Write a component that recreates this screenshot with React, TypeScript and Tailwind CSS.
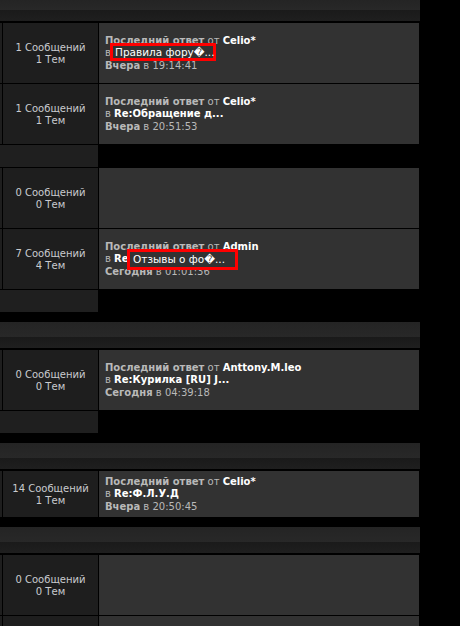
import React from "react";

// ─── DATA ────────────────────────────────────────────────────────────────
type Last = {
  author: string;
  topic: string;
  day: string;
  time: string;
};

type Row = {
  kind: "row";
  msgs?: number;
  topics?: number;
  h: string;
  last?: Last;
  mark?: { text: string; box: string };
};

type Item =
  | Row
  | { kind: "band" }
  | { kind: "gap"; h: string }
  | { kind: "header"; cut?: boolean };

const items: Item[] = [
  { kind: "header", cut: true },
  { kind: "gap", h: "h-[2px]" },
  {
    kind: "row",
    msgs: 1,
    topics: 1,
    h: "h-[60px]",
    // the red box hides the topic link, only "в" stays visible
    last: { author: "Celio*", topic: "", day: "Вчера", time: "19:14:41" },
    mark: { text: "Правила фору�...", box: "left-[11px] top-[20px] w-[106px] h-[18px] pl-[2px]" },
  },
  { kind: "gap", h: "h-px" },
  {
    kind: "row",
    msgs: 1,
    topics: 1,
    h: "h-[60px]",
    last: { author: "Celio*", topic: "Re:Обращение д...", day: "Вчера", time: "20:51:53" },
  },
  { kind: "gap", h: "h-px" },
  { kind: "band" },
  { kind: "gap", h: "h-px" },
  { kind: "row", msgs: 0, topics: 0, h: "h-[60px]" },
  { kind: "gap", h: "h-px" },
  {
    kind: "row",
    msgs: 7,
    topics: 4,
    h: "h-[60px]",
    last: { author: "Admin", topic: "Re", day: "Сегодня", time: "01:01:36" },
    mark: { text: "Отзывы о фо�...", box: "left-[28px] top-[20px] w-[111px] h-[21px] pl-[3px]" },
  },
  { kind: "gap", h: "h-px" },
  { kind: "band" },
  { kind: "gap", h: "h-[10px]" },
  { kind: "header" },
  { kind: "gap", h: "h-[2px]" },
  {
    kind: "row",
    msgs: 0,
    topics: 0,
    h: "h-[60px]",
    last: { author: "Anttony.M.leo", topic: "Re:Курилка [RU] J...", day: "Сегодня", time: "04:39:18" },
  },
  { kind: "gap", h: "h-px" },
  { kind: "band" },
  { kind: "gap", h: "h-[10px]" },
  { kind: "header" },
  { kind: "gap", h: "h-[2px]" },
  {
    kind: "row",
    msgs: 14,
    topics: 1,
    h: "h-[46px]",
    last: { author: "Celio*", topic: "Re:Ф.Л.У.Д", day: "Вчера", time: "20:50:45" },
  },
  { kind: "gap", h: "h-[10px]" },
  { kind: "header" },
  { kind: "gap", h: "h-[2px]" },
  { kind: "row", msgs: 0, topics: 0, h: "h-[60px]" },
  { kind: "gap", h: "h-px" },
  // next row is cut by the window, its text is below the fold
  { kind: "row", h: "h-[60px]" },
];

// ─── PIECES ──────────────────────────────────────────────────────────────
function Header({ cut }: { cut?: boolean }) {
  return (
    <div className="w-[420px] flex flex-col">
      <div className={`${cut ? "h-[10px]" : "h-[15px]"} bg-gradient-to-b from-[#242424] to-[#282828]`} />
      <div className="h-[11px] bg-gradient-to-b from-[#1a1a1a] to-[#1f1f1f]" />
    </div>
  );
}

function ForumRow({ row }: { row: Row }) {
  return (
    <div className={`flex ${row.h}`}>
      <div className="w-[2px] bg-[#1e1e1e]" />
      <div className="w-px bg-black" />
      <div className="w-[95px] bg-[#1e1e1e] flex flex-col items-center justify-center text-[#c9cbcf] leading-[12px] pt-px">
        {row.msgs !== undefined && (
          <>
            <span>{row.msgs} Сообщений</span>
            <span>{row.topics} Тем</span>
          </>
        )}
      </div>
      <div className="w-px bg-black" />
      <div className="relative w-[320px] bg-[#323232] pl-[6px] flex flex-col justify-center leading-[12.5px] pt-px">
        {row.last && (
          <>
            <div className="text-[#b9b9b9] whitespace-nowrap">
              <b>Последний ответ</b> от <b className="text-white">{row.last.author}</b>
            </div>
            <div className="text-[#b9b9b9] whitespace-nowrap">
              в <b className="text-white">{row.last.topic}</b>
            </div>
            <div className="text-[#b9b9b9] whitespace-nowrap">
              <b>{row.last.day}</b> в {row.last.time}
            </div>
          </>
        )}
        {row.mark && (
          <div
            className={`absolute ${row.mark.box} border-[3px] border-[#ff0000] bg-[#323232] text-white text-[10.5px] flex items-center whitespace-nowrap`}
          >
            {row.mark.text}
          </div>
        )}
      </div>
    </div>
  );
}

export default function App() {
  return (
    <div className="w-[460px] h-[626px] overflow-hidden bg-black text-[10px] font-['DejaVu_Sans',sans-serif]">
      {items.map((it, i) => {
        if (it.kind === "header") return <Header key={i} cut={it.cut} />;
        if (it.kind === "gap") return <div key={i} className={it.h} />;
        if (it.kind === "band") return <div key={i} className="w-[98px] h-[22px] bg-[#1f1f1f]" />;
        return <ForumRow key={i} row={it} />;
      })}
    </div>
  );
}
